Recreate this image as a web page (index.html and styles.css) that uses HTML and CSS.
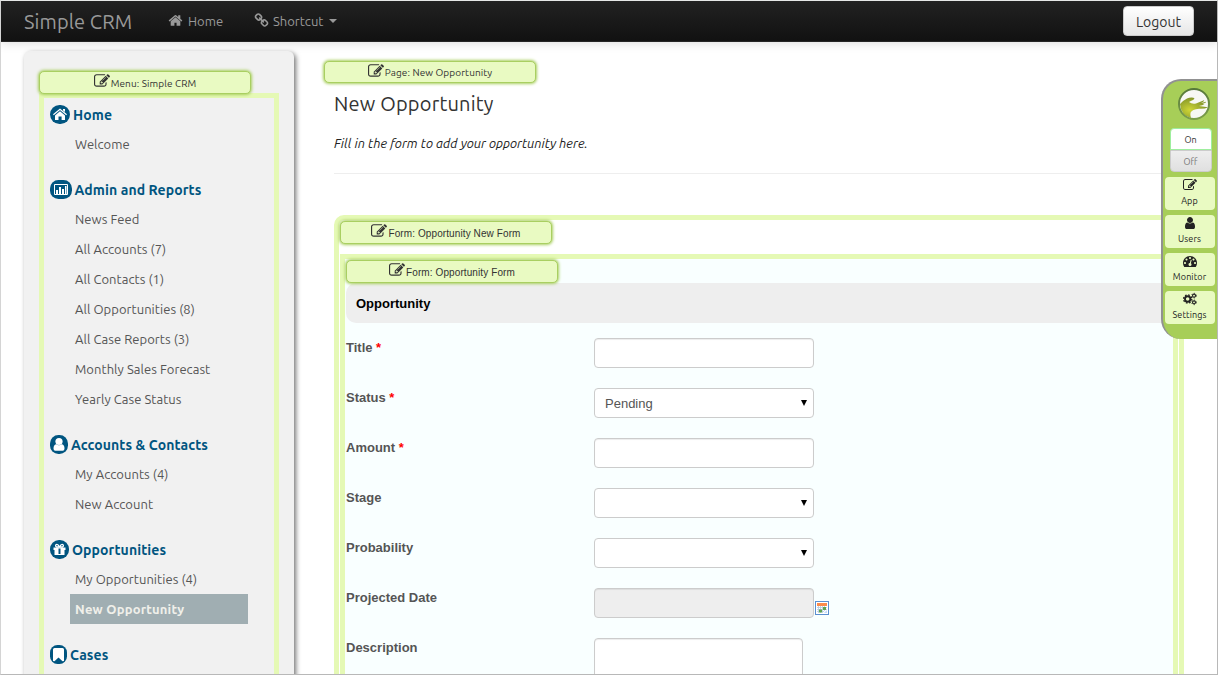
FILE: index.html
```
<!DOCTYPE html>
<html lang="en">
<head>
    <meta charset="UTF-8">
    <meta name="viewport" content="width=device-width, initial-scale=1.0">
    <title>Simple CRM</title>
    <link rel="stylesheet" href="styles.css">
</head>
<body>
    <!-- Shared icons -->
    <svg class="sprite" width="0" height="0">
        <symbol id="edit" viewBox="0 0 1792 1792"><path d="M888 1184l116-116-152-152-116 116v56h96v96h56zm440-720q-16-16-33 1l-350 350q-17 17-1 33t33-1l350-350q17-17 1-33zm80 594v190q0 119-84.5 203.5t-203.5 84.5h-832q-119 0-203.5-84.5t-84.5-203.5v-832q0-119 84.5-203.5t203.5-84.5h832q63 0 117 25 15 7 18 23 3 17-9 29l-49 49q-14 14-32 8-23-6-45-6h-832q-66 0-113 47t-47 113v832q0 66 47 113t113 47h832q66 0 113-47t47-113v-126q0-13 9-22l64-64q15-15 35-7t20 29zm-96-738l288 288-672 672h-288v-288zm444 132l-92 92-288-288 92-92q28-28 68-28t68 28l152 152q28 28 28 68t-28 68z"/></symbol>
        <symbol id="home" viewBox="0 0 1792 1792"><path d="M1472 992v480q0 26-19 45t-45 19h-384v-384h-256v384h-384q-26 0-45-19t-19-45v-480q0-1 .5-3t.5-3l575-474 575 474q1 2 1 6zm223-69l-62 74q-8 9-21 11h-3q-13 0-21-7l-692-577-692 577q-12 8-24 7-13-2-21-11l-62-74q-8-10-7-23.5t11-21.5l719-599q32-26 76-26t76 26l244 204v-195q0-14 9-23t23-9h192q14 0 23 9t9 23v408l219 182q10 8 11 21.5t-7 23.5z"/></symbol>
        <symbol id="link" viewBox="0 0 1792 1792"><path d="M1520 1216q0-40-28-68l-208-208q-28-28-68-28-42 0-72 32 3 3 19 18.5t21.5 21.5 15 19 13 25.5 3.5 27.5q0 40-28 68t-68 28q-15 0-27.5-3.5t-25.5-13-19-15-21.5-21.5-18.5-19q-33 31-33 73 0 40 28 68l206 207q27 27 68 27 40 0 68-26l147-146q28-28 28-67zm-703-705q0-40-28-68l-206-207q-28-28-68-28-39 0-68 27l-147 146q-28 28-28 67 0 40 28 68l208 208q27 27 68 27 42 0 72-31-3-3-19-18.5t-21.5-21.5-15-19-13-25.5-3.5-27.5q0-40 28-68t68-28q15 0 27.5 3.5t25.5 13 19 15 21.5 21.5 18.5 19q33-31 33-73zm895 705q0 120-85 203l-147 146q-83 83-203 83-121 0-204-85l-206-207q-83-83-83-203 0-123 88-209l-88-88q-86 88-208 88-120 0-204-84l-208-208q-84-84-84-204t85-203l147-146q83-83 203-83 121 0 204 85l206 207q83 83 83 203 0 123-88 209l88 88q86-88 208-88 120 0 204 84l208 208q84 84 84 204z"/></symbol>
        <symbol id="user" viewBox="0 0 1792 1792"><path d="M1536 1399q0 109-62.5 187t-150.5 78h-854q-88 0-150.5-78t-62.5-187q0-85 8.5-160.5t31.5-152 58.5-131 94-89 134.5-34.5q131 128 313 128t313-128q76 0 134.5 34.5t94 89 58.5 131 31.5 152 8.5 160.5zm-256-887q0 159-112.5 271.5t-271.5 112.5-271.5-112.5-112.5-271.5 112.5-271.5 271.5-112.5 271.5 112.5 112.5 271.5z"/></symbol>
        <symbol id="gauge" viewBox="0 0 1792 1792"><path d="M384 1152q0-53-37.5-90.5t-90.5-37.5-90.5 37.5-37.5 90.5 37.5 90.5 90.5 37.5 90.5-37.5 37.5-90.5zm192-448q0-53-37.5-90.5t-90.5-37.5-90.5 37.5-37.5 90.5 37.5 90.5 90.5 37.5 90.5-37.5 37.5-90.5zm428 481l101-382q6-26-7.5-48.5t-38.5-29.5-48 6.5-30 39.5l-101 382q-60 5-107 43.5t-63 98.5q-20 77 20 146t117 89 146-20 89-117q16-60-6-117t-72-91zm660-33q0-53-37.5-90.5t-90.5-37.5-90.5 37.5-37.5 90.5 37.5 90.5 90.5 37.5 90.5-37.5 37.5-90.5zm-640-640q0-53-37.5-90.5t-90.5-37.5-90.5 37.5-37.5 90.5 37.5 90.5 90.5 37.5 90.5-37.5 37.5-90.5zm448 192q0-53-37.5-90.5t-90.5-37.5-90.5 37.5-37.5 90.5 37.5 90.5 90.5 37.5 90.5-37.5 37.5-90.5zm320 448q0 261-141 483-19 29-54 29h-1402q-35 0-54-29-141-221-141-483 0-182 71-348t191-286 286-191 348-71 348 71 286 191 191 286 71 348z"/></symbol>
        <symbol id="cogs" viewBox="0 0 15 14">
            <g fill="none" stroke="currentColor">
                <circle cx="5" cy="7" r="2.9" stroke-width="2"/>
                <circle cx="5" cy="7" r="4.4" stroke-width="1.4" stroke-dasharray="1.8 1.656"/>
                <circle cx="11.8" cy="3.4" r="1.6" stroke-width="1.2"/>
                <circle cx="11.8" cy="3.4" r="2.5" stroke-width="0.9" stroke-dasharray="1.2 1.418"/>
                <circle cx="11.8" cy="10.6" r="1.6" stroke-width="1.2"/>
                <circle cx="11.8" cy="10.6" r="2.5" stroke-width="0.9" stroke-dasharray="1.2 1.418"/>
            </g>
        </symbol>
    </svg>

    <div class="window">
        <header class="navbar">
            <a class="brand" href="#">Simple CRM</a>
            <a class="nav-link nav-home" href="#"><svg class="nav-icon"><use href="#home"/></svg>Home</a>
            <a class="nav-link" href="#"><svg class="nav-icon"><use href="#link"/></svg>Shortcut<span class="caret"></span></a>
            <button class="logout">Logout</button>
        </header>

        <div class="page">
            <aside class="sidebar">
                <div class="tag tag-menu"><svg class="tag-icon"><use href="#edit"/></svg>Menu: Simple CRM</div>
                <nav class="menu">
                    <div class="category">
                        <h3><svg class="round" width="20" height="19" viewBox="0 0 20 19"><rect width="20" height="19" rx="9.5" fill="#005580"/><path d="M3.400 9.800L10 4.200l6.600 5.600" fill="none" stroke="#fff" stroke-width="1.200"/><path d="M5 10.400l5-4.200 5 4.200V15h-3.400v-3.600H8.500V15H5zM13 4h2v3l-2-1.500z" fill="#fff"/></svg>Home</h3>
                        <a href="#">Welcome</a>
                    </div>
                    <div class="category">
                        <h3><svg class="round" width="22" height="19" viewBox="0 0 22 19"><rect width="22" height="19" rx="8.500" fill="#005580"/><path d="M4.500 4.500h13v10h-13z" fill="none" stroke="#fff"/><path d="M6 10h2v4H6zM9 7h2v7H9zM12 9h2v5h-2zM15 6h1.500v8H15z" fill="#fff"/></svg>Admin and Reports</h3>
                        <a href="#">News Feed</a>
                        <a href="#">All Accounts (7)</a>
                        <a href="#">All Contacts (1)</a>
                        <a href="#">All Opportunities (8)</a>
                        <a href="#">All Case Reports (3)</a>
                        <a href="#">Monthly Sales Forecast</a>
                        <a href="#">Yearly Case Status</a>
                    </div>
                    <div class="category">
                        <h3><svg class="round" width="18" height="19" viewBox="0 0 18 19"><rect width="18" height="19" rx="8.500" fill="#005580"/><circle cx="9" cy="6.500" r="3.600" fill="#fff"/><path d="M3.500 13.500q0-4 3-4.200 2.500 1.700 5 0 3 .2 3 4.200 0 2.300-1.800 2.300H5.300q-1.800 0-1.800-2.300z" fill="#fff"/></svg>Accounts &amp; Contacts</h3>
                        <a href="#">My Accounts (4)</a>
                        <a href="#">New Account</a>
                    </div>
                    <div class="category">
                        <h3><svg class="round" width="19" height="19" viewBox="0 0 19 19"><rect width="19" height="19" rx="9" fill="#005580"/><path d="M3.500 7.500h12V10h-1v5h-10v-5h-1z" fill="#fff"/><path d="M9.500 7Q8 4 6.300 4.500 4.800 5.500 6.500 7zM9.500 7Q11 4 12.700 4.500 14.200 5.500 12.500 7z" fill="none" stroke="#fff" stroke-width="1.300"/><path d="M8.500 8.500h2V14h-2z" fill="#005580"/></svg>Opportunities</h3>
                        <a href="#">My Opportunities (4)</a>
                        <a href="#" class="active">New Opportunity</a>
                    </div>
                    <div class="category">
                        <h3><svg class="round" width="17" height="19" viewBox="0 0 17 19"><rect width="17" height="19" rx="7.500" fill="#005580"/><path d="M3 4.500Q3 3 4.500 3h8Q14 3 14 4.500V16l-1.500.3-4-3.800-4 3.800L3 16z" fill="#fff"/></svg>Cases</h3>
                    </div>
                </nav>
            </aside>

            <main class="content">
                <div class="tag tag-page"><svg class="tag-icon"><use href="#edit"/></svg>Page: New Opportunity</div>
                <h1>New Opportunity</h1>
                <p class="intro">Fill in the form to add your opportunity here.</p>
                <hr>
                <div class="outer-form">
                    <div class="tag tag-form"><svg class="tag-icon"><use href="#edit"/></svg>Form: Opportunity New Form</div>
                    <form class="inner-form">
                        <div class="tag tag-form"><svg class="tag-icon"><use href="#edit"/></svg>Form: Opportunity Form</div>
                        <h2>Opportunity</h2>
                        <div class="row"><label>Title <b>*</b></label><input class="field" type="text"></div>
                        <div class="row"><label>Status <b>*</b></label><div class="field select">Pending</div></div>
                        <div class="row"><label>Amount <b>*</b></label><input class="field" type="text"></div>
                        <div class="row"><label>Stage</label><div class="field select"></div></div>
                        <div class="row"><label>Probability</label><div class="field select"></div></div>
                        <div class="row"><label>Projected Date</label><input class="field readonly" type="text" readonly>
                            <svg class="calendar" width="14" height="14" viewBox="0 0 14 14"><rect x=".5" y=".5" width="13" height="13" fill="#fff" stroke="#5b8fd0"/><path d="M2 2h10v3H2z" fill="#fb8b4b"/><path d="M2 6.500h10M2 8.500h10M2 10.500h7M3.500 5v7M5.500 5v7M7.500 5v7M9.500 5v5" stroke="#b5c9dc" stroke-width=".8"/><path d="M8 6h3v3H8zM4 8.500h3v3H4z" fill="#5fa450"/><path d="M9 12l3-3v3z" fill="#c4dafa"/></svg>
                        </div>
                        <div class="row"><label>Description</label><textarea class="field area"></textarea></div>
                    </form>
                </div>
            </main>
        </div>

        <!-- Admin bar, floats over the page -->
        <div class="admin-bar">
            <svg class="logo" width="32" height="32" viewBox="0 0 32 32">
                <defs>
                    <radialGradient id="hand" cx=".35" cy=".6" r=".6"><stop offset="0" stop-color="#cfd636"/><stop offset="1" stop-color="#84962a"/></radialGradient>
                    <linearGradient id="ring" x2="0" y2="1"><stop offset="0" stop-color="#56783a"/><stop offset="1" stop-color="#7b9e4a"/></linearGradient>
                </defs>
                <circle cx="16" cy="16" r="15" fill="#f7f8f4"/>
                <path d="M2 16Q5 12.500 9 10.500q3-1.300 6.500-.8 2 .8-.5 2.300-2.500.9-4 2 3 2.300 7 1.400l8-3.200q1 .4-3 2.800l5-1.200q.5.800-3.500 2.200l2 .2q-2 1.300-5.500 1.800l9 1.200q-3 1.800-9 1.500-7 .5-8.500 4-.5 2 .5 5.300Q3 28 2 16z" fill="url(#hand)"/>
                <circle cx="16" cy="16" r="15" fill="none" stroke="url(#ring)" stroke-width="2"/>
            </svg>
            <div class="switch"><span class="on">On</span><span class="off">Off</span></div>
            <a class="tool" href="#"><svg class="tool-icon"><use href="#edit"/></svg>App</a>
            <a class="tool" href="#"><svg class="tool-icon"><use href="#user"/></svg>Users</a>
            <a class="tool" href="#"><svg class="tool-icon"><use href="#gauge"/></svg>Monitor</a>
            <a class="tool" href="#"><svg class="tool-icon cogs"><use href="#cogs"/></svg>Settings</a>
        </div>
    </div>
</body>
</html>
```
FILE: styles.css
```
* {
    box-sizing: border-box;
}
body {
    margin: 0;
    font-family: Ubuntu, 'Noto Sans', sans-serif;
    font-size: 13px;
    color: #333;
    background: #fff;
}
a {
    text-decoration: none;
}
svg {
    fill: currentColor;
    flex: none;
}
.sprite {
    position: absolute;
}
.window {
    position: relative;
    width: 1218px;
    height: 675px;
    overflow: hidden;
    border: 1px solid #b8b8b8;
    border-left-color: #d4d4d4;
    border-top-color: #e6e8e7;
}

/* Navbar */
.navbar {
    position: relative;
    display: flex;
    align-items: center;
    height: 41px;
    padding: 0 23px;
    background: linear-gradient(#222, #111);
    border-bottom: 1px solid #252525;
    box-shadow: 0 1px 10px rgba(0, 0, 0, 0.15);
}
.navbar a {
    color: #999;
}
.brand {
    width: 145px;
    font-size: 20px;
    letter-spacing: 0.1px;
    white-space: nowrap;
}
.nav-link {
    display: flex;
    align-items: center;
    font-size: 13px;
}
.nav-home {
    width: 86px;
}
.nav-icon {
    width: 15px;
    height: 15px;
    margin: -2px 4px 0 -1px;
}
.nav-home .nav-icon {
    margin-right: 5px;
}
.caret {
    margin-left: 6px;
    border: 4px solid transparent;
    border-top-color: #999;
    border-bottom: 0;
}
.logout {
    width: 71px;
    height: 30px;
    margin-left: auto;
    padding: 2px 0 0;
    font: 14px Ubuntu, 'Noto Sans', sans-serif;
    color: #333;
    background: linear-gradient(#fff, #e6e6e6);
    border: 1px solid #ccc;
    border-radius: 4px;
}

/* Green editor tags */
.tag {
    position: relative;
    z-index: 1;
    display: flex;
    align-items: center;
    justify-content: center;
    width: 212px;
    height: 23px;
    padding-top: 2px;
    font-size: 10px;
    line-height: 22px;
    color: #333;
    white-space: nowrap;
    background: #e9fac2;
    border: 1px solid #a9cf61;
    border-radius: 5px;
    box-shadow: 0 0 3px 1px #a9cf61;
}
.tag-icon {
    width: 16px;
    height: 16px;
    margin: -5px 1px 0 0;
}
.tag-menu,
.tag-page {
    letter-spacing: 0.1px;
}
.tag-form {
    font-family: 'Liberation Sans', sans-serif;
    letter-spacing: 0.1px;
}

.page {
    display: flex;
    align-items: flex-start;
}

/* Sidebar */
.sidebar {
    width: 270px;
    height: 660px;
    margin: 9px 0 0 23px;
    padding: 20px 15px 0;
    background: #f1f1f1;
    border-radius: 6px 6px 0 0;
    box-shadow: 2px 2px 5px #777;
}
.menu {
    height: 640px;
    margin-top: -1px;
    padding: 1px 6px;
    border: 5px solid #e5f9b5;
}
.category {
    display: flex;
    flex-direction: column;
    padding-bottom: 15px;
}
.category h3 {
    display: flex;
    align-items: center;
    height: 30px;
    margin: 0;
    padding-top: 2px;
    font-size: 14px;
    line-height: 28px;
    letter-spacing: 0.1px;
    color: #005580;
}
.round {
    margin: -2px 3px 0 0;
}
.category:nth-child(2) .round {
    margin-right: 2.500px;
}
.category a {
    width: 178px;
    height: 30px;
    margin-left: 20px;
    padding-left: 5px;
    line-height: 30px;
    letter-spacing: 0.05px;
    color: #555;
}
.category .active {
    font-weight: bold;
    letter-spacing: 0.2px;
    color: #f0f0ea;
    background: #a0aeb2;
}

/* Page content */
.content {
    width: 850px;
    margin: 19px 0 0 40px;
}
.tag-page {
    height: 22px;
    margin: 0 0 1px -10px;
}
h1 {
    margin: 0;
    font-size: 20px;
    font-weight: normal;
    line-height: 40px;
    letter-spacing: 0.2px;
}
.intro {
    margin: 0;
    font-style: italic;
    line-height: 38px;
    padding-bottom: 2px;
    letter-spacing: 0.03px;
    color: #222;
}
hr {
    height: 1px;
    margin: 9px 0 41px;
    background: #eee;
    border: 0;
}
.outer-form {
    height: 600px;
    border: 5px solid #e5f9b5;
    border-radius: 10px;
}
.outer-form .tag {
    margin: 1px 0 0 1px;
}
.inner-form {
    height: 560px;
    margin: 10px 1px 0;
    font-family: 'Liberation Sans', sans-serif;
    background: #f9ffff;
    border: 5px solid #e5f9b5;
}
h2 {
    height: 40px;
    margin: 0 0 15px 1px;
    padding-left: 10px;
    font-size: 13px;
    line-height: 42px;
    color: #000;
    background: #eee;
    border-radius: 10px;
}
.row {
    display: flex;
    height: 50px;
    padding-left: 1px;
}
.row label {
    width: 248px;
    font-weight: bold;
    line-height: 20px;
    color: #555;
}
.row b {
    color: #f00;
}
.field {
    width: 220px;
    height: 30px;
    padding: 0 10px;
    line-height: 29px;
    color: #555;
    background: #fff;
    border: 1px solid #ccc;
    border-radius: 4px;
    box-shadow: inset 0 1px 1px rgba(0, 0, 0, 0.075);
}
.select {
    display: flex;
    justify-content: space-between;
    padding-right: 6px;
    box-shadow: none;
}
.select::after {
    content: '';
    align-self: center;
    margin-left: auto;
    margin-top: -1px;
    border: 3.5px solid transparent;
    border-top: 6px solid #000;
    border-bottom: 0;
}
.readonly {
    background: #eee;
}
.calendar {
    margin: 13px 0 0 1px;
}
.area {
    width: 209px;
    height: 80px;
    resize: none;
}

/* Admin bar */
.admin-bar {
    position: absolute;
    top: 78px;
    right: 0;
    z-index: 5;
    display: flex;
    flex-direction: column;
    align-items: center;
    width: 56px;
    height: 260px;
    padding: 7px 1px 0 0;
    background: #a7ce58;
    border: 2px solid #919191;
    border-right: 0;
    border-bottom: 0;
    border-radius: 20px 0 0 20px;
}
.logo {
    margin-left: 9px;
}
.switch {
    display: flex;
    flex-direction: column;
    width: 42px;
    height: 44px;
    margin: 8px 0 5px 2px;
    font-size: 9px;
    line-height: 22px;
    text-align: center;
}
.on {
    height: 22px;
    background: #fff;
    border: 1px solid #9eee9e;
    border-radius: 4px 4px 0 0;
}
.off {
    height: 22px;
    color: #777;
    background: linear-gradient(#eee, #e0e0e0);
    border: 1px solid #ccc;
    border-radius: 0 0 4px 4px;
}
.tool {
    display: flex;
    flex-direction: column;
    align-items: center;
    width: 50px;
    height: 33px;
    margin: 0 0 5px;
    padding-top: 1px;
    font-size: 9px;
    line-height: 18px;
    letter-spacing: 0.1px;
    color: #222;
    background: #e9fac2;
    border-radius: 4px;
}
.tool-icon {
    width: 14px;
    height: 14px;
}
```
